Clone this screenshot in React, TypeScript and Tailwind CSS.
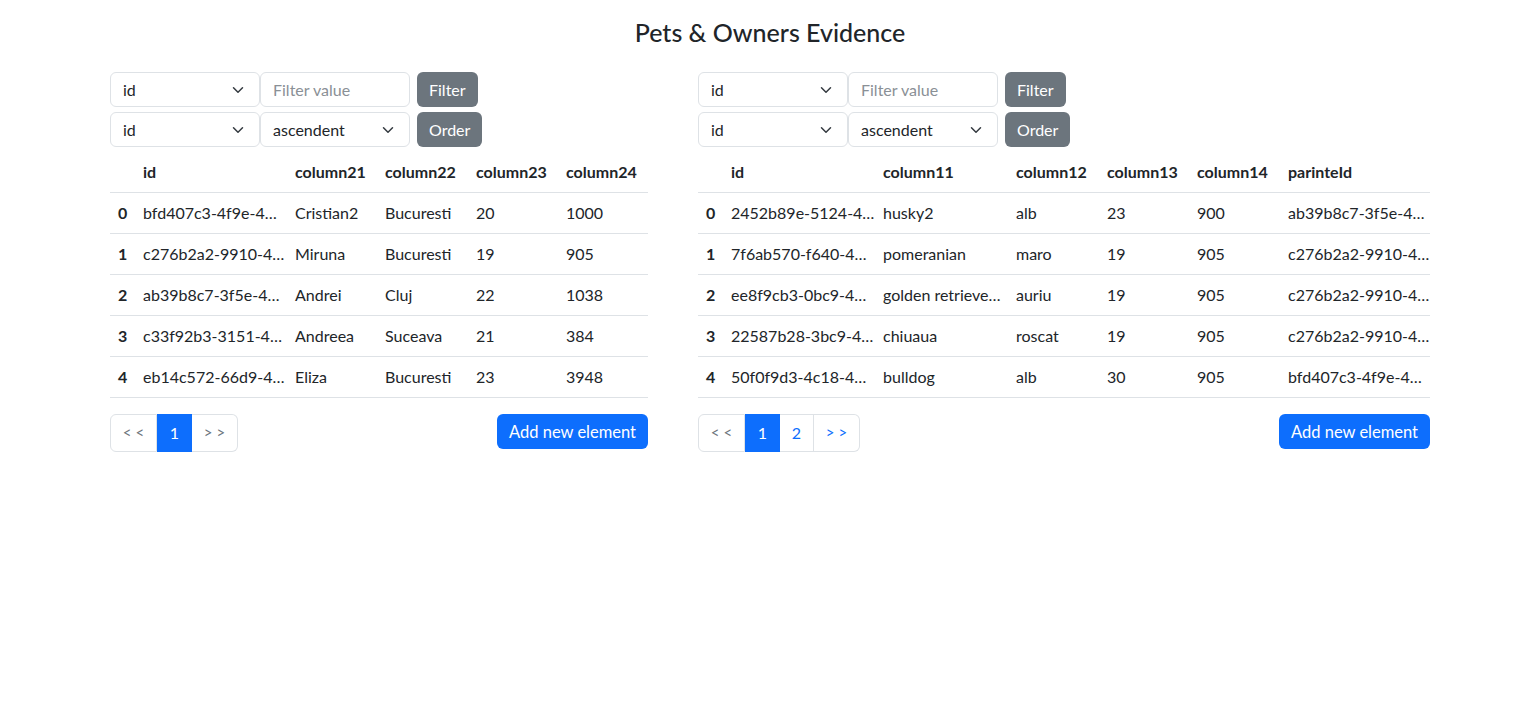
const owners = [
  ["bfd407c3-4f9e-4…", "Cristian2", "Bucuresti", "20", "1000"],
  ["c276b2a2-9910-4…", "Miruna", "Bucuresti", "19", "905"],
  ["ab39b8c7-3f5e-4…", "Andrei", "Cluj", "22", "1038"],
  ["c33f92b3-3151-4…", "Andreea", "Suceava", "21", "384"],
  ["eb14c572-66d9-4…", "Eliza", "Bucuresti", "23", "3948"],
];

const pets = [
  ["2452b89e-5124-4…", "husky2", "alb", "23", "900", "ab39b8c7-3f5e-4…"],
  ["7f6ab570-f640-4…", "pomeranian", "maro", "19", "905", "c276b2a2-9910-4…"],
  ["ee8f9cb3-0bc9-4…", "golden retrieve…", "auriu", "19", "905", "c276b2a2-9910-4…"],
  ["22587b28-3bc9-4…", "chiuaua", "roscat", "19", "905", "c276b2a2-9910-4…"],
  ["50f0f9d3-4c18-4…", "bulldog", "alb", "30", "905", "bfd407c3-4f9e-4…"],
];

function Chevron() {
  return (
    <svg width="16" height="12" viewBox="0 0 16 16" className="shrink-0">
      <path d="m2 5 6 6 6-6" fill="none" stroke="#343a40" strokeWidth="2" strokeLinecap="round" strokeLinejoin="round" />
    </svg>
  );
}

function FakeSelect({ value }: { value: string }) {
  return (
    <div className="flex h-[35px] w-[150px] items-center justify-between rounded-[6px] border border-[#dee2e6] bg-white pl-[12px] pr-[13px] pt-[1px] text-[16px] text-[#212529]">
      <span>{value}</span>
      <Chevron />
    </div>
  );
}

function Controls() {
  return (
    <div className="flex flex-col gap-[5px]">
      <div className="flex items-center">
        <FakeSelect value="id" />
        <input
          placeholder="Filter value"
          className="h-[35px] w-[150px] rounded-[6px] border border-[#dee2e6] px-[12px] text-[16px] text-[#212529] outline-none placeholder:text-[#8a9096]"
        />
        <button className="ml-[7px] h-[35px] rounded-[6px] bg-[#6c757d] px-[12px] pt-[1px] text-[16px] text-white">
          Filter
        </button>
      </div>
      <div className="flex items-center">
        <FakeSelect value="id" />
        <FakeSelect value="ascendent" />
        <button className="ml-[7px] h-[35px] rounded-[6px] bg-[#6c757d] px-[12px] pt-[1px] text-[16px] text-white">
          Order
        </button>
      </div>
    </div>
  );
}

function DataTable({ headers, rows, widths }: { headers: string[]; rows: string[][]; widths: string[] }) {
  return (
    <table className="mt-[5px] w-full table-fixed border-collapse text-[16px] text-[#212529]">
      <colgroup>
        {widths.map((w, i) => (
          <col key={i} className={w} />
        ))}
      </colgroup>
      <thead>
        <tr className="border-b border-[#dee2e6]">
          <th className="h-[40px] px-[8px]" />
          {headers.map((h) => (
            <th key={h} className="h-[40px] whitespace-nowrap px-[8px] text-left font-bold">
              {h}
            </th>
          ))}
        </tr>
      </thead>
      <tbody>
        {rows.map((r, i) => (
          <tr key={i} className="border-b border-[#dee2e6]">
            <th className="h-[41px] px-[8px] text-left font-bold">{i}</th>
            {r.map((c, j) => (
              <td key={j} className="h-[41px] whitespace-nowrap px-[8px]">
                {c}
              </td>
            ))}
          </tr>
        ))}
      </tbody>
    </table>
  );
}

function Pager({ pages }: { pages: number }) {
  return (
    <div className="flex h-[38px] text-[16px]">
      <span className="flex w-[47px] items-center justify-center rounded-l-[6px] border border-[#dee2e6] pl-[4px] text-[15px] tracking-[4px] text-[#6c757d]">
        &lt;&lt;
      </span>
      <span className="flex w-[35px] items-center justify-center bg-[#0d6efd] text-white">1</span>
      {pages > 1 && (
        <span className="flex w-[34px] items-center justify-center border border-l-0 border-[#dee2e6] text-[#0d6efd]">2</span>
      )}
      <span
        className={
          pages > 1
            ? "flex w-[46px] items-center justify-center rounded-r-[6px] border border-l-0 border-[#dee2e6] pl-[4px] text-[15px] tracking-[4px] text-[#0d6efd]"
            : "flex w-[46px] items-center justify-center rounded-r-[6px] border border-l-0 border-[#dee2e6] pl-[4px] text-[15px] tracking-[4px] text-[#6c757d]"
        }
      >
        &gt;&gt;
      </span>
    </div>
  );
}

function Panel({ headers, rows, widths, pages, className }: { headers: string[]; rows: string[][]; widths: string[]; pages: number; className: string }) {
  return (
    <div className={className}>
      <Controls />
      <DataTable headers={headers} rows={rows} widths={widths} />
      <div className="mt-[16px] flex items-start justify-between">
        <Pager pages={pages} />
        <button className="h-[35px] rounded-[6px] bg-[#0d6efd] px-[12px] pt-[3px] text-[16.5px] text-white">
          Add new element
        </button>
      </div>
    </div>
  );
}

export default function App() {
  return (
    <div className="min-h-[718px] bg-white font-['Segoe_UI',Lato,'Liberation_Sans',sans-serif] text-[#212529]">
      <h4 className="pl-[6px] pt-[18px] text-center text-[25px] font-medium leading-[29px]">Pets &amp; Owners Evidence</h4>
      <div className="mt-[25px] flex gap-[50px] pl-[110px]">
        <Panel
          className="w-[538px]"
          headers={["id", "column21", "column22", "column23", "column24"]}
          rows={owners}
          widths={["w-[25px]", "w-[152px]", "w-[90px]", "w-[91px]", "w-[90px]", "w-[90px]"]}
          pages={1}
        />
        <Panel
          className="w-[732px]"
          headers={["id", "column11", "column12", "column13", "column14", "parinteId"]}
          rows={pets}
          widths={["w-[25px]", "w-[152px]", "w-[133px]", "w-[91px]", "w-[90px]", "w-[91px]", "w-[150px]"]}
          pages={2}
        />
      </div>
    </div>
  );
}
